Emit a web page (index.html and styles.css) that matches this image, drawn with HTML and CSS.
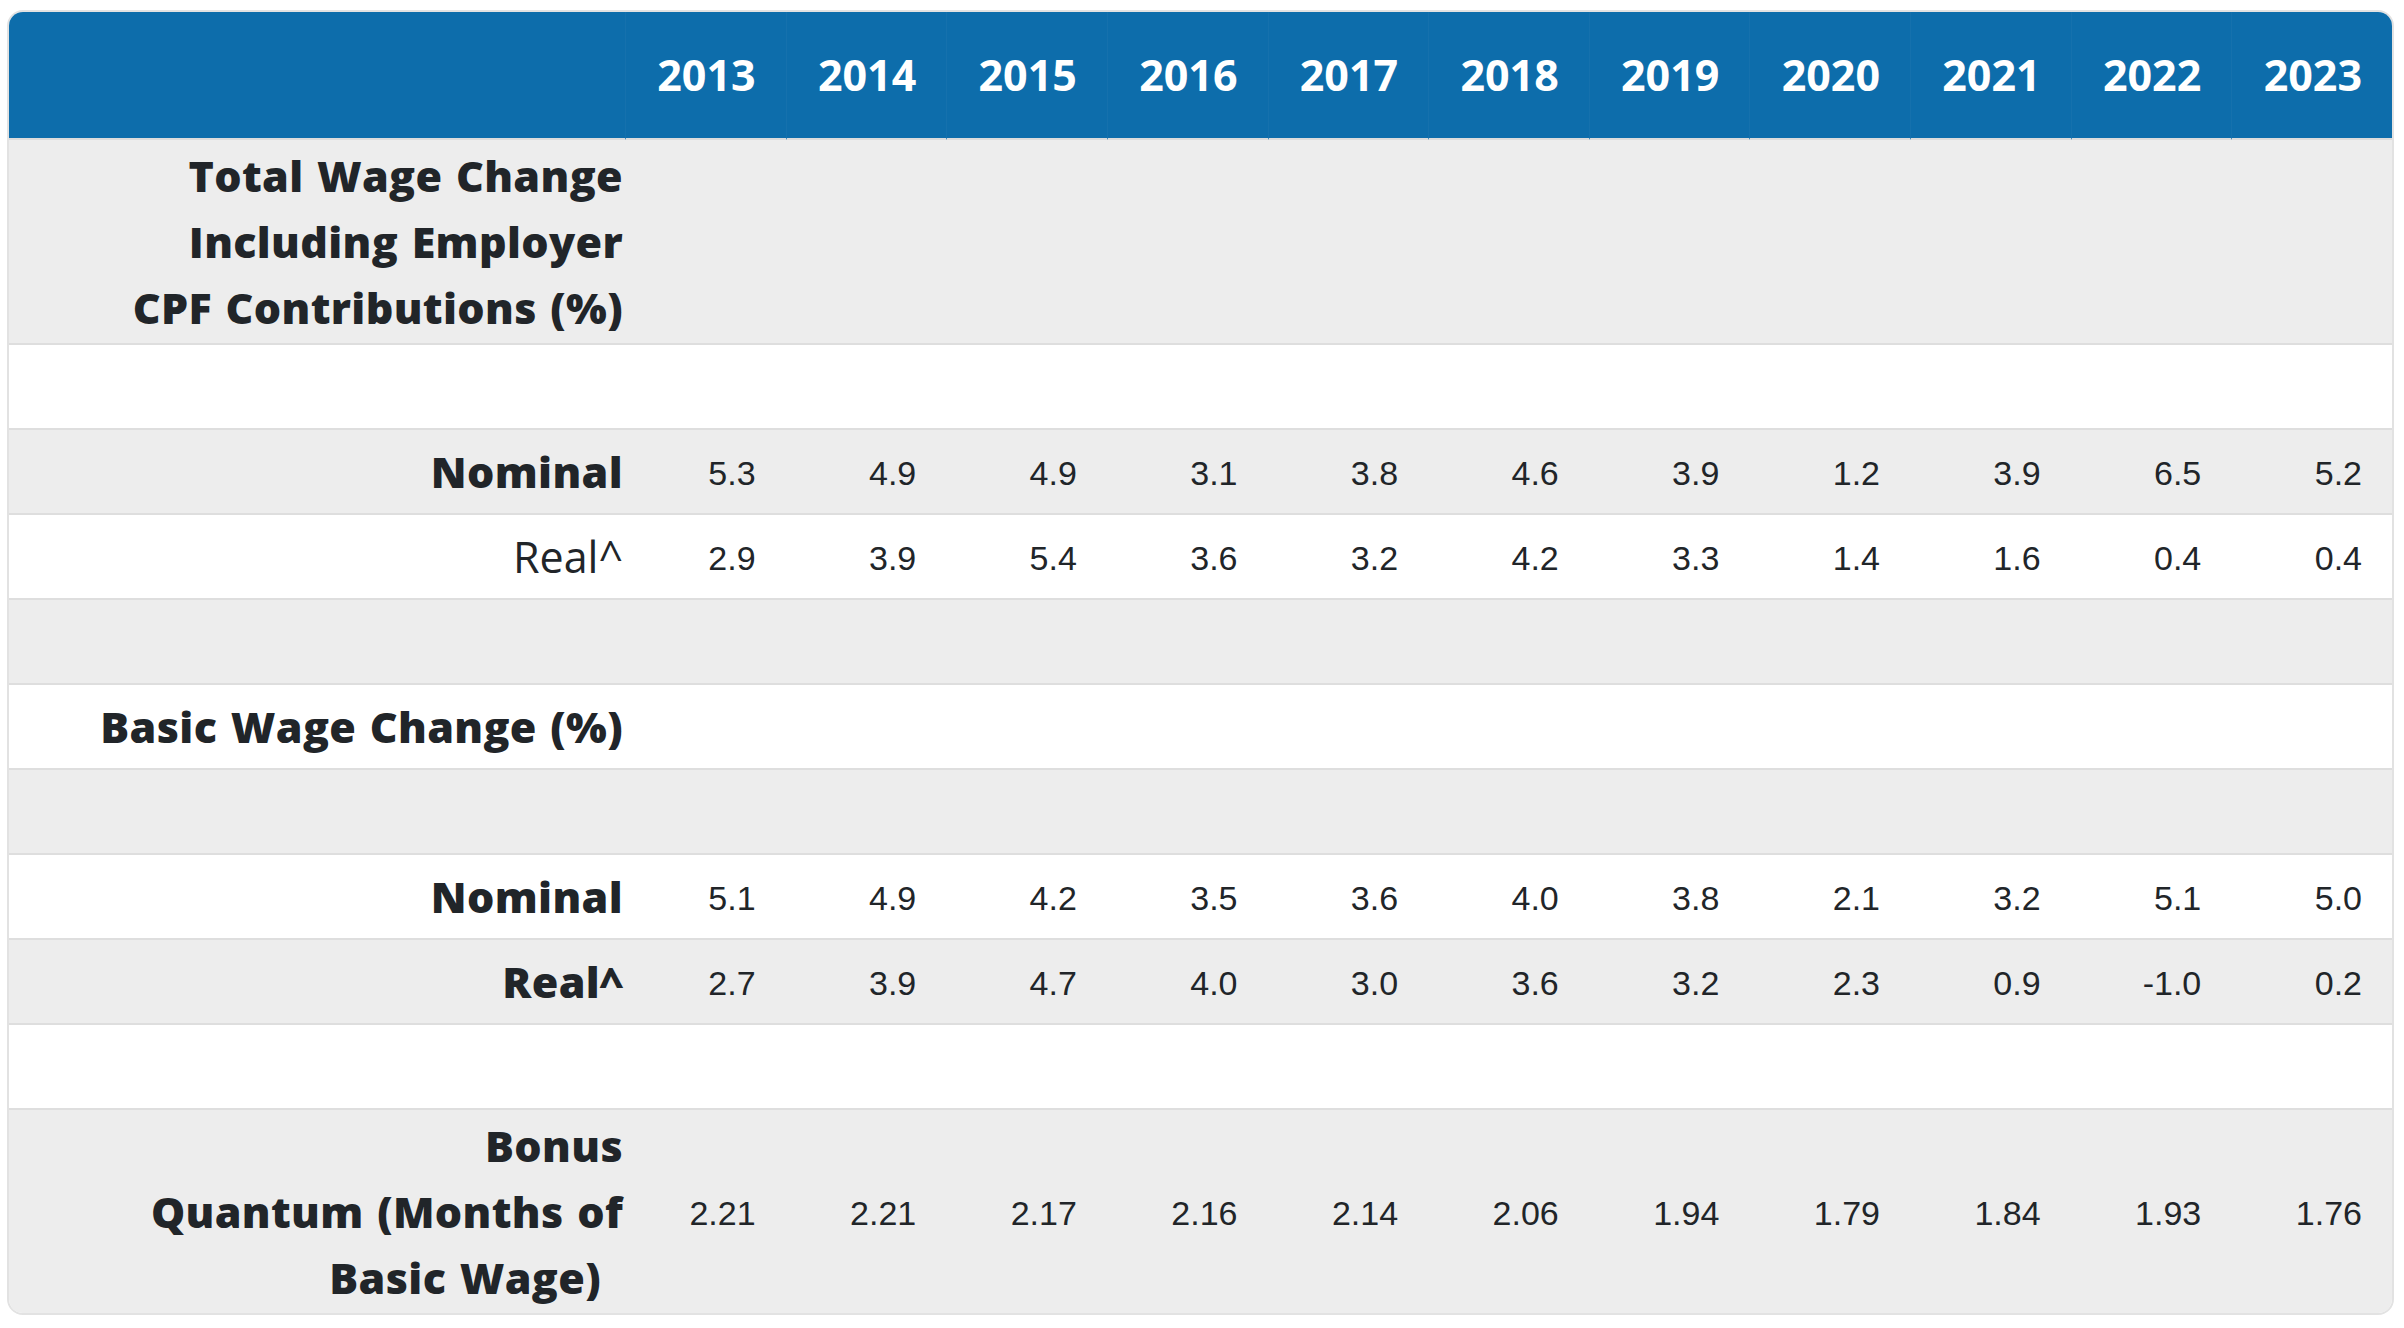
FILE: index.html
```html
<!DOCTYPE html>
<html lang="en">
<head>
<meta charset="utf-8">
<title>Wage Change</title>
<link rel="stylesheet" href="styles.css">
</head>
<body>
<div class="wrap">
  <table class="wage">
    <colgroup>
      <col class="c-label">
      <col><col><col><col><col><col><col><col><col><col><col>
    </colgroup>
    <thead>
      <tr>
        <th class="lbl"></th>
        <th>2013</th><th>2014</th><th>2015</th><th>2016</th><th>2017</th><th>2018</th><th>2019</th><th>2020</th><th>2021</th><th>2022</th><th>2023</th>
      </tr>
    </thead>
    <tbody>
      <tr class="tall">
        <th class="lbl">Total Wage Change<br>Including Employer<br>CPF Contributions (%)</th>
        <td></td><td></td><td></td><td></td><td></td><td></td><td></td><td></td><td></td><td></td><td></td>
      </tr>
      <tr>
        <th class="lbl"></th>
        <td></td><td></td><td></td><td></td><td></td><td></td><td></td><td></td><td></td><td></td><td></td>
      </tr>
      <tr>
        <th class="lbl">Nominal</th>
        <td>5.3</td><td>4.9</td><td>4.9</td><td>3.1</td><td>3.8</td><td>4.6</td><td>3.9</td><td>1.2</td><td>3.9</td><td>6.5</td><td>5.2</td>
      </tr>
      <tr>
        <th class="lbl"><span class="reg">Real^</span></th>
        <td>2.9</td><td>3.9</td><td>5.4</td><td>3.6</td><td>3.2</td><td>4.2</td><td>3.3</td><td>1.4</td><td>1.6</td><td>0.4</td><td>0.4</td>
      </tr>
      <tr>
        <th class="lbl"></th>
        <td></td><td></td><td></td><td></td><td></td><td></td><td></td><td></td><td></td><td></td><td></td>
      </tr>
      <tr>
        <th class="lbl">Basic Wage Change (%)</th>
        <td></td><td></td><td></td><td></td><td></td><td></td><td></td><td></td><td></td><td></td><td></td>
      </tr>
      <tr>
        <th class="lbl"></th>
        <td></td><td></td><td></td><td></td><td></td><td></td><td></td><td></td><td></td><td></td><td></td>
      </tr>
      <tr>
        <th class="lbl">Nominal</th>
        <td>5.1</td><td>4.9</td><td>4.2</td><td>3.5</td><td>3.6</td><td>4.0</td><td>3.8</td><td>2.1</td><td>3.2</td><td>5.1</td><td>5.0</td>
      </tr>
      <tr>
        <th class="lbl">Real^</th>
        <td>2.7</td><td>3.9</td><td>4.7</td><td>4.0</td><td>3.0</td><td>3.6</td><td>3.2</td><td>2.3</td><td>0.9</td><td>-1.0</td><td>0.2</td>
      </tr>
      <tr>
        <th class="lbl"></th>
        <td></td><td></td><td></td><td></td><td></td><td></td><td></td><td></td><td></td><td></td><td></td>
      </tr>
      <tr class="tall last">
        <th class="lbl">Bonus<br>Quantum (Months of<br>Basic Wage)<span class="trail"></span></th>
        <td>2.21</td><td>2.21</td><td>2.17</td><td>2.16</td><td>2.14</td><td>2.06</td><td>1.94</td><td>1.79</td><td>1.84</td><td>1.93</td><td>1.76</td>
      </tr>
    </tbody>
  </table>
</div>
</body>
</html>
```

FILE: styles.css
```css
html, body {
  margin: 0;
  padding: 0;
  background: #ffffff;
}

.wrap {
  box-sizing: border-box;
  margin: 10px 0 0 7px;
  width: 2387px;
  border: 2px solid #e2e2e2;
  border-radius: 16px;
  overflow: hidden;
  background: #ffffff;
}

.wage {
  width: 100%;
  border-collapse: separate;
  border-spacing: 0;
  table-layout: fixed;
}

.c-label {
  width: 616px;
}

.wage th,
.wage td {
  box-sizing: border-box;
  margin: 0;
  vertical-align: middle;
  text-align: right;
  white-space: nowrap;
  color: #212529;
}

/* header */
.wage thead th {
  height: 128px;
  padding: 0 30px 0 0;
  background: #0d6dab;
  color: #ffffff;
  font-family: "Open Sans", "DejaVu Sans", sans-serif;
  font-weight: 700;
  font-size: 43px;
  line-height: 66px;
  border-bottom: 2px solid #dcdcdc;
  border-left: 1px solid #1571ad;
}

.wage thead th:first-child {
  border-left: 0;
}

/* body */
.wage tbody tr {
  background: #ffffff;
}

.wage tbody tr:nth-child(odd) {
  background: #ededed;
}

.wage tbody th,
.wage tbody td {
  height: 85px;
  border-bottom: 2px solid #dedede;
}

.wage tbody tr.tall th,
.wage tbody tr.tall td {
  height: 205px;
}

.wage tbody tr.last th,
.wage tbody tr.last td {
  height: 203px;
  border-bottom: 0;
}

.wage tbody th.lbl {
  padding: 0 2px 0 0;
  font-family: "Open Sans", "DejaVu Sans", sans-serif;
  font-weight: 800;
  font-size: 43px;
  line-height: 66px;
  letter-spacing: 0.35px;
  word-spacing: 2px;
}

.reg {
  font-weight: 400;
  letter-spacing: 0;
}

.trail {
  display: inline-block;
  width: 22px;
}

.wage tbody td {
  padding: 3px 30px 0 0;
  font-family: "Liberation Sans", Arial, sans-serif;
  font-weight: 400;
  font-size: 34px;
  line-height: 40px;
}
```
